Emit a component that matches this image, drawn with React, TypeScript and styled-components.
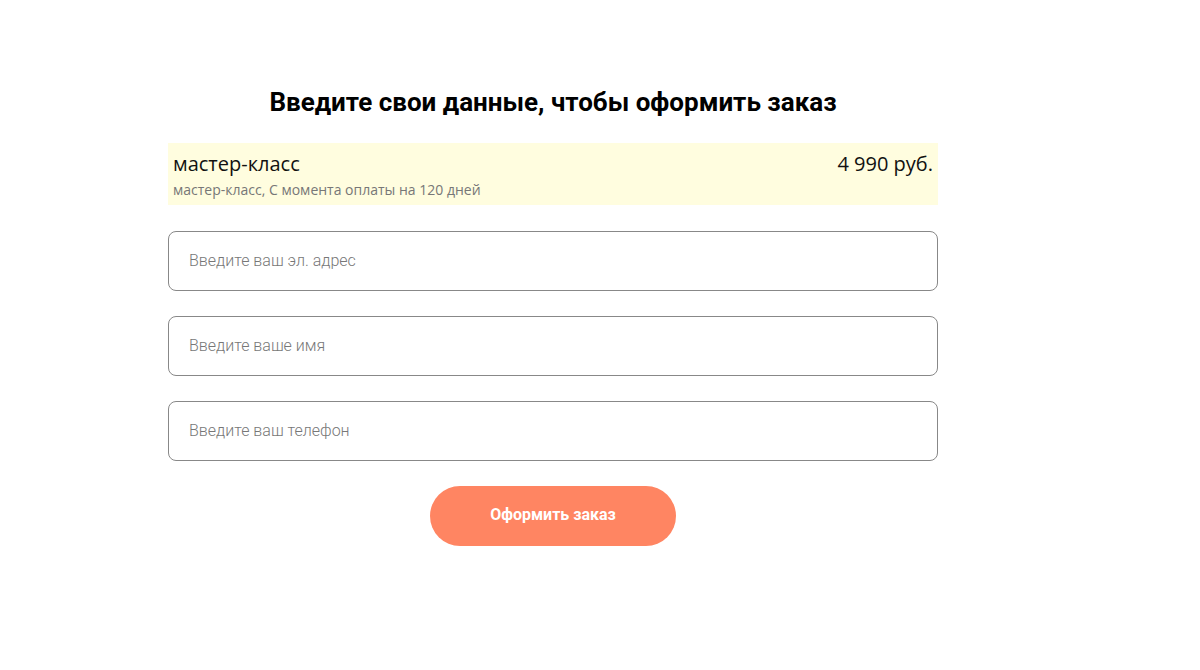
import styled, {createGlobalStyle} from 'styled-components';

const GlobalStyle = createGlobalStyle`
    body {
        margin: 0;
        background: #fff;
        font-family: Roboto, "Liberation Sans", sans-serif;
    }
`;

export default function App() {
    return (
        <>
            <GlobalStyle/>
            <Page>
                <OrderForm onSubmit={(e) => e.preventDefault()}>
                    <Title>Введите свои данные, чтобы оформить заказ</Title>
                    <Product>
                        <ProductRow>
                            <ProductName>мастер-класс</ProductName>
                            <ProductPrice>4 990 руб.</ProductPrice>
                        </ProductRow>
                        <ProductNote>мастер-класс, С момента оплаты на 120 дней</ProductNote>
                    </Product>
                    <Field type="email" placeholder="Введите ваш эл. адрес"/>
                    <Field type="text" placeholder="Введите ваше имя"/>
                    <Field type="tel" placeholder="Введите ваш телефон"/>
                    <SubmitButton type="submit">Оформить заказ</SubmitButton>
                </OrderForm>
            </Page>
        </>
    )
}

const Page = styled.div`
    padding: 85px 0 0 168px;
`;
const OrderForm = styled.form`
    width: 770px;
    display: flex;
    flex-direction: column;
    gap: 25px;
`;
const Title = styled.h2`
    margin: 0 0 -1px;
    font-family: Roboto, sans-serif;
    font-weight: 700;
    font-size: 26px;
    line-height: 34px;
    color: #000;
    text-align: center;
`;
const Product = styled.div`
    background: #fffddf;
    padding: 7px 5px 3px;
    margin-bottom: 1px;
`;
const ProductRow = styled.div`
    display: flex;
    justify-content: space-between;
    align-items: baseline;
`;
const ProductName = styled.span`
    font-family: "Open Sans", sans-serif;
    font-size: 20px;
    line-height: 27px;
    color: #111;
`;
const ProductPrice = styled(ProductName)``;
const ProductNote = styled.div`
    font-family: "Open Sans", sans-serif;
    font-size: 14px;
    line-height: 25px;
    color: #777;
`;
const Field = styled.input`
    box-sizing: border-box;
    height: 60px;
    width: 100%;
    border: 1px solid #888;
    border-radius: 8px;
    padding: 0 20px 2px;
    font-family: Roboto, sans-serif;
    font-weight: 300;
    font-size: 16px;
    color: #333;
    outline: none;
    &::placeholder {
        color: #777;
    }
`;
const SubmitButton = styled.button`
    align-self: center;
    width: 246px;
    height: 60px;
    padding: 0 0 3px;
    border: none;
    border-radius: 30px;
    background: #ff8562;
    color: #fff;
    font-family: Roboto, sans-serif;
    font-weight: 700;
    font-size: 16px;
    cursor: pointer;
`;
